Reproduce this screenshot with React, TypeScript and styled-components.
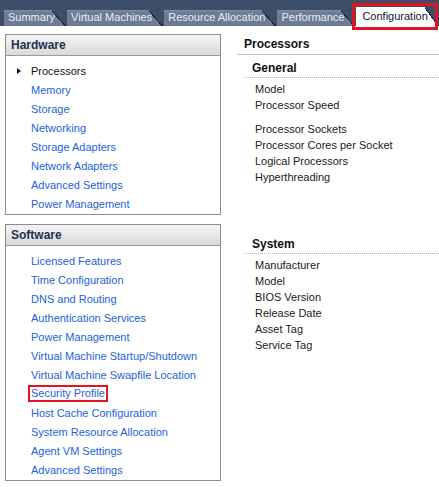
import React from "react";
import styled, { createGlobalStyle, css } from "styled-components";

const Global = createGlobalStyle`
  html, body { margin: 0; padding: 0; overflow: hidden; background: #ffffff; }
  body { font-family: "Liberation Sans", Arial, sans-serif; font-size: 11px; color: #1a1a1a; }
  * { box-sizing: border-box; }
`;

const Page = styled.div`
  width: 439px;
  height: 487px;
  display: flex;
  flex-direction: column;
`;

const TabStrip = styled.div`
  height: 26px;
  background: #3c4e69;
  display: flex;
  align-items: flex-end;
  padding-left: 4px;
  gap: 1px;
  white-space: nowrap;
  position: relative;
  z-index: 2;
`;

const SLANT = 14;

const Tab = styled.div<{ $active?: boolean; $stub?: boolean }>`
  flex-shrink: 0;
  position: relative;
  height: ${(p) => (p.$active ? 19 : 16)}px;
  line-height: ${(p) => (p.$active ? 18 : 15)}px;
  padding: 0 ${SLANT - 3}px 0 ${(p) => (p.$active ? 6 : 4)}px;
  ${(p) => p.$stub && css`width: 40px;`}
  font-size: 11px;
  color: ${(p) => (p.$active ? "#0d1a33" : "#e8ecf2")};
  background:
    linear-gradient(
        to top right,
        ${(p) => (p.$active ? "#ffffff" : "#6e7b94")} calc(50% - 1px),
        #1a2233 calc(50% - 1px),
        #1a2233 50%,
        transparent 50%
      )
      right top / ${SLANT}px 100% no-repeat,
    linear-gradient(${(p) => (p.$active ? "#ffffff, #ffffff" : "#8591a8, #6e7b94 2px, #6e7b94")})
      left top / calc(100% - ${SLANT}px) 100% no-repeat;
  ${(p) =>
    p.$active &&
    css`
      &::after {
        content: "";
        position: absolute;
        left: -4px;
        right: 1px;
        top: -4px;
        bottom: -4px;
        border: 3px solid #e3141f;
      }
    `}
`;

const Main = styled.div`
  display: flex;
  gap: 16px;
  padding: 8px 0 0 5px;
`;

const LeftColumn = styled.div`
  width: 216px;
  flex-shrink: 0;
  display: flex;
  flex-direction: column;
  gap: 9px;
`;

const Panel = styled.div`
  border: 1px solid #8e8e8e;
  background: #ffffff;
`;

const PanelHeader = styled.div`
  height: 21px;
  line-height: 20px;
  padding-left: 5px;
  font-size: 12px;
  font-weight: bold;
  color: #1c3253;
  background: linear-gradient(#f4f4f4, #dadada);
  border-bottom: 1px solid #9a9a9a;
`;

const NavList = styled.ul`
  list-style: none;
  margin: 0;
  padding: 5px 0 1px 0;
`;

const NavItem = styled.li<{ $selected?: boolean }>`
  height: 19px;
  display: flex;
  align-items: center;
  font-size: 11px;
  color: ${(p) => (p.$selected ? "#111111" : "#2462dc")};
`;

const Marker = styled.span`
  width: 25px;
  flex-shrink: 0;
  display: flex;
  padding-left: 11px;
`;

const Triangle = styled.span`
  width: 0;
  height: 0;
  border-left: 4px solid #111;
  border-top: 3px solid transparent;
  border-bottom: 3px solid transparent;
`;

const Highlight = styled.span`
  display: inline-block;
  line-height: 11px;
  outline: 2px solid #e3141f;
  outline-offset: 1px;
`;

const RightPane = styled.div`
  flex: 1;
  min-width: 0;
  display: flex;
  flex-direction: column;
  padding-top: 1px;
`;

const PaneTitle = styled.div`
  height: 20px;
  line-height: 19px;
  padding-left: 7px;
  font-size: 12px;
  font-weight: bold;
  color: #111;
  border-bottom: 1px solid #c4c4c4;
`;

const Section = styled.div<{ $gapTop: number }>`
  margin: ${(p) => p.$gapTop}px 0 0 7px;
`;

const SectionHeading = styled.div`
  height: 19px;
  line-height: 19px;
  padding-left: 8px;
  font-size: 12px;
  font-weight: bold;
  color: #111;
  border-bottom: 1px dotted #b4b4b4;
`;

const FieldGroup = styled.div`
  padding: 3px 0 0 11px;
  & + & {
    padding-top: 8px;
  }
`;

const Field = styled.div`
  height: 16px;
  line-height: 16px;
  font-size: 11px;
  color: #1a1a1a;
`;

const tabs = ["Summary", "Virtual Machines", "Resource Allocation", "Performance", "Configuration"];

const hardware = [
  "Processors",
  "Memory",
  "Storage",
  "Networking",
  "Storage Adapters",
  "Network Adapters",
  "Advanced Settings",
  "Power Management",
];

const software = [
  "Licensed Features",
  "Time Configuration",
  "DNS and Routing",
  "Authentication Services",
  "Power Management",
  "Virtual Machine Startup/Shutdown",
  "Virtual Machine Swapfile Location",
  "Security Profile",
  "Host Cache Configuration",
  "System Resource Allocation",
  "Agent VM Settings",
  "Advanced Settings",
];

const general = [
  ["Model", "Processor Speed"],
  ["Processor Sockets", "Processor Cores per Socket", "Logical Processors", "Hyperthreading"],
];

const system = [["Manufacturer", "Model", "BIOS Version", "Release Date", "Asset Tag", "Service Tag"]];

function InfoSection({ title, groups, gapTop }: { title: string; groups: string[][]; gapTop: number }) {
  return (
    <Section $gapTop={gapTop}>
      <SectionHeading>{title}</SectionHeading>
      {groups.map((g, i) => (
        <FieldGroup key={i}>
          {g.map((f) => (
            <Field key={f}>{f}</Field>
          ))}
        </FieldGroup>
      ))}
    </Section>
  );
}

export default function App() {
  return (
    <Page>
      <Global />
      <TabStrip>
        {tabs.map((t) => (
          <Tab key={t} $active={t === "Configuration"}>
            {t}
          </Tab>
        ))}
        <Tab $stub aria-hidden="true" />
      </TabStrip>
      <Main>
        <LeftColumn>
          <Panel>
            <PanelHeader>Hardware</PanelHeader>
            <NavList>
              {hardware.map((h, i) => (
                <NavItem key={h} $selected={i === 0}>
                  <Marker>{i === 0 && <Triangle />}</Marker>
                  {h}
                </NavItem>
              ))}
            </NavList>
          </Panel>
          <Panel>
            <PanelHeader>Software</PanelHeader>
            <NavList>
              {software.map((s) => (
                <NavItem key={s}>
                  <Marker />
                  {s === "Security Profile" ? <Highlight>{s}</Highlight> : s}
                </NavItem>
              ))}
            </NavList>
          </Panel>
        </LeftColumn>
        <RightPane>
          <PaneTitle>Processors</PaneTitle>
          <InfoSection title="General" groups={general} gapTop={4} />
          <InfoSection title="System" groups={system} gapTop={50} />
        </RightPane>
      </Main>
    </Page>
  );
}
